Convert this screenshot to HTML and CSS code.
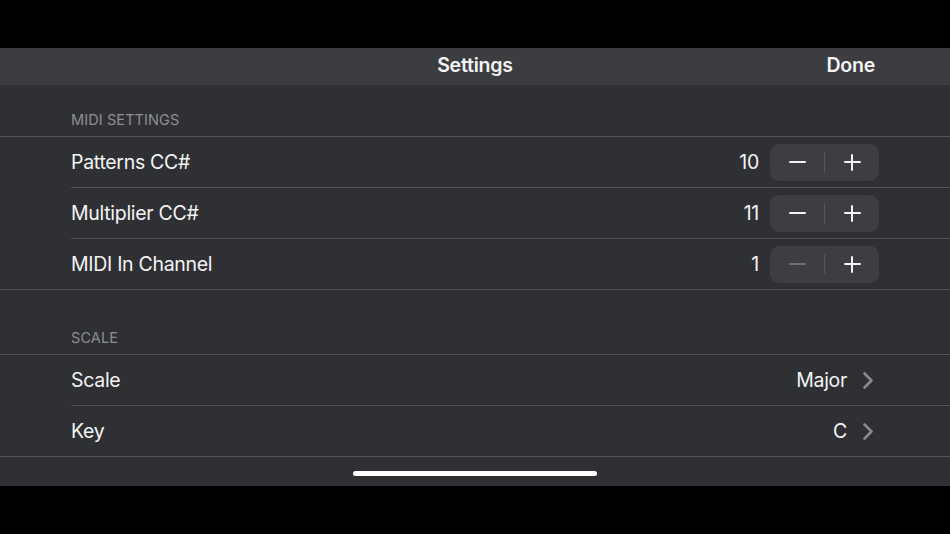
FILE: index.html
```html
<!DOCTYPE html>
<html>
<head>
<meta charset="utf-8">
<link rel="stylesheet" href="styles.css">
</head>
<body>
<div class="screen">
  <div class="navbar">
    <div class="nav-title">Settings</div>
    <div class="nav-done">Done</div>
  </div>
  <div class="section-header first">MIDI SETTINGS</div>
  <div class="group">
    <div class="row">
      <span class="label">Patterns CC#</span>
      <span class="value">10</span>
      <div class="stepper">
        <span class="btn minus"></span>
        <span class="divider"></span>
        <span class="btn plus"></span>
      </div>
    </div>
    <div class="row">
      <span class="label">Multiplier CC#</span>
      <span class="value">11</span>
      <div class="stepper">
        <span class="btn minus"></span>
        <span class="divider"></span>
        <span class="btn plus"></span>
      </div>
    </div>
    <div class="row">
      <span class="label">MIDI In Channel</span>
      <span class="value">1</span>
      <div class="stepper">
        <span class="btn minus disabled"></span>
        <span class="divider"></span>
        <span class="btn plus"></span>
      </div>
    </div>
  </div>
  <div class="section-header second">SCALE</div>
  <div class="group">
    <div class="row link">
      <span class="label">Scale</span>
      <span class="value">Major</span>
      <svg class="chevron" width="12" height="17" viewBox="0 0 12 17"><path d="M2.5 1.5 L9.5 8.5 L2.5 15.5" fill="none" stroke="#8a8a8f" stroke-width="2.6" stroke-linecap="round" stroke-linejoin="round"/></svg>
    </div>
    <div class="row link">
      <span class="label">Key</span>
      <span class="value">C</span>
      <svg class="chevron" width="12" height="17" viewBox="0 0 12 17"><path d="M2.5 1.5 L9.5 8.5 L2.5 15.5" fill="none" stroke="#8a8a8f" stroke-width="2.6" stroke-linecap="round" stroke-linejoin="round"/></svg>
    </div>
  </div>
  <div class="footer">
    <div class="home-indicator"></div>
  </div>
</div>
</body>
</html>
```
FILE: styles.css
```css
html, body {
  margin: 0;
  padding: 0;
  background: #000;
}
body {
  width: 950px;
  height: 534px;
  font-family: Inter, "Liberation Sans", sans-serif;
  color: #f4f4f5;
  overflow: hidden;
}
.screen {
  margin-top: 48px;
  height: 438px;
  background: #2f3034;
  display: flex;
  flex-direction: column;
}
.navbar {
  height: 37px;
  line-height: 35px;
  background: #3c3d41;
  display: flex;
  justify-content: center;
  position: relative;
  font-size: 19.5px;
  font-weight: 600;
  letter-spacing: -0.2px;
  flex-shrink: 0;
}
.nav-done {
  position: absolute;
  right: 75px;
  top: 0;
}
.section-header {
  display: flex;
  align-items: flex-end;
  padding-left: 71px;
  padding-bottom: 8px;
  box-sizing: border-box;
  font-size: 14.5px;
  color: #8e8e93;
  letter-spacing: 0.1px;
  flex-shrink: 0;
}
.section-header.first { height: 51px; }
.section-header.second { height: 64px; }
.group {
  border-top: 1px solid #505155;
  border-bottom: 1px solid #505155;
  flex-shrink: 0;
}
.row {
  margin-left: 71px;
  padding-right: 71px;
  height: 50px;
  display: flex;
  align-items: center;
  font-size: 19.5px;
  letter-spacing: -0.3px;
}
.row + .row {
  border-top: 1px solid #505155;
}
.label {
  flex: 1;
}
.value {
  margin-right: 11px;
}
.stepper {
  width: 109px;
  height: 37px;
  border-radius: 9px;
  background: #3d3e43;
  display: flex;
  align-items: center;
}
.btn {
  flex: 1;
  height: 37px;
  position: relative;
}
.btn::before, .plus::after {
  content: "";
  position: absolute;
  left: 50%;
  top: 50%;
  width: 17px;
  height: 2px;
  margin-left: -8.5px;
  margin-top: -1px;
  background: #f4f4f5;
  border-radius: 1px;
}
.plus::after {
  width: 2px;
  height: 17px;
  margin-left: -1px;
  margin-top: -8.5px;
}
.minus.disabled::before {
  background: #707075;
}
.divider {
  width: 1px;
  height: 20px;
  background: #57585c;
}
.row.link {
  padding-right: 76px;
}
.row.link .value {
  margin-right: 15px;
}
.chevron {
  display: block;
}
.footer {
  flex: 1;
  display: flex;
  justify-content: center;
  padding-top: 14px;
}
.home-indicator {
  width: 244px;
  height: 5px;
  border-radius: 3px;
  background: #fff;
}
```
